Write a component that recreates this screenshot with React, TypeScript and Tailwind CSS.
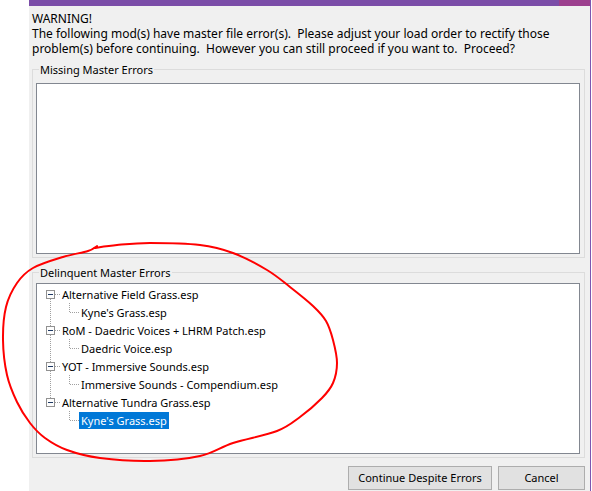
import React from "react";

const tree = [
  { name: "Alternative Field Grass.esp", child: "Kyne's Grass.esp" },
  { name: "RoM - Daedric Voices + LHRM Patch.esp", child: "Daedric Voice.esp" },
  { name: "YOT - Immersive Sounds.esp", child: "Immersive Sounds - Compendium.esp" },
  { name: "Alternative Tundra Grass.esp", child: "Kyne's Grass.esp", selected: true },
];

const dot = "#a0a0a0";

// hand drawn circle around the tree, as points
const scribble: [number, number][] = [
  [94, 248], [117, 245], [150, 243], [200, 245], [233, 253], [267, 270], [290, 287],
  [313, 306], [326, 321], [333, 340], [337, 363], [333, 383], [322, 398], [300, 417],
  [277, 431], [233, 443], [200, 456], [150, 461], [100, 458], [67, 450], [45, 438],
  [30, 423], [17, 402], [7, 375], [3, 340], [6, 307], [17, 283], [33, 268], [63, 257],
  [88, 251], [97, 246],
];

function smooth(pts: [number, number][]) {
  let d = `M${pts[0][0]},${pts[0][1]}`;
  for (let i = 0; i < pts.length - 1; i++) {
    const p0 = pts[i - 1] || pts[i];
    const p1 = pts[i];
    const p2 = pts[i + 1];
    const p3 = pts[i + 2] || p2;
    const c1x = p1[0] + (p2[0] - p0[0]) / 6;
    const c1y = p1[1] + (p2[1] - p0[1]) / 6;
    const c2x = p2[0] - (p3[0] - p1[0]) / 6;
    const c2y = p2[1] - (p3[1] - p1[1]) / 6;
    d += ` C${c1x},${c1y} ${c2x},${c2y} ${p2[0]},${p2[1]}`;
  }
  return d;
}

function RootLines({ first, last }: { first: boolean; last: boolean }) {
  return (
    <svg width="23" height="18" className="shrink-0" shapeRendering="crispEdges">
      {!first && <line x1="13.5" y1="0" x2="13.5" y2="5" stroke={dot} strokeDasharray="1 1" />}
      {!last && <line x1="13.5" y1="14" x2="13.5" y2="18" stroke={dot} strokeDasharray="1 1" />}
      <line x1="18" y1="9.5" x2="23" y2="9.5" stroke={dot} strokeDasharray="1 1" />
      <rect x="9.5" y="5.5" width="8" height="8" fill="#fdfdfd" stroke="#919191" />
      <line x1="11" y1="9.5" x2="16" y2="9.5" stroke="#1e3964" />
    </svg>
  );
}

function ChildLines({ last }: { last: boolean }) {
  return (
    <svg width="42" height="18" className="shrink-0" shapeRendering="crispEdges">
      {!last && <line x1="13.5" y1="0" x2="13.5" y2="18" stroke={dot} strokeDasharray="1 1" />}
      <line x1="32.5" y1="0" x2="32.5" y2="10" stroke={dot} strokeDasharray="1 1" />
      <line x1="33" y1="9.5" x2="42" y2="9.5" stroke={dot} strokeDasharray="1 1" />
    </svg>
  );
}

function Group({ title, tight, children }: { title: string; tight?: boolean; children?: React.ReactNode }) {
  return (
    <fieldset
      className={`w-[553px] border border-[#dcdcdc] pl-[3px] pr-[4px] pb-[3px] ${tight ? "pt-[3px]" : "pt-[6px]"}`}
    >
      <legend className="ml-[3px] px-[1px] leading-[15px] text-[11px]">{title}</legend>
      <div className="h-[171px] bg-white border border-[#828790] pt-px text-[11px]">{children}</div>
    </fieldset>
  );
}

export default function App() {
  return (
    <div
      className="relative w-[592px] h-[491px] bg-white flex overflow-hidden text-[12px] text-black"
      style={{ fontFamily: '"Noto Sans", "Segoe UI", sans-serif' }}
    >
      <div className="w-[29px] shrink-0" />
      <div className="w-[562px] shrink-0 flex flex-col bg-[#f0f0f0] border-r border-[#7c55b0]">
        {/* title bar strip */}
        <div className="h-[6px] flex">
          <div className="flex-1 bg-[#7b4da8]" />
          <div className="w-[31px] bg-[#9c3f8e]" />
        </div>

        <div className="pl-[3px] pt-[5px] flex flex-col">
          <div className="leading-[15px] whitespace-pre">
            <div>WARNING!</div>
            <div>The following mod(s) have master file error(s).  Please adjust your load order to rectify those</div>
            <div>problem(s) before continuing.  However you can still proceed if you want to.  Proceed?</div>
          </div>

          <div className="mt-[6px]">
            <Group title="Missing Master Errors" />
          </div>

          <div className="mt-[7px]">
            <Group title="Delinquent Master Errors" tight>
              {tree.map((t, i) => (
                <React.Fragment key={i}>
                  <div className="flex items-center h-[18px]">
                    <RootLines first={i === 0} last={i === tree.length - 1} />
                    <span className="px-[2px] leading-[17px] whitespace-pre">{t.name}</span>
                  </div>
                  <div className="flex items-center h-[18px]">
                    <ChildLines last={i === tree.length - 1} />
                    <span
                      className={`px-[2px] leading-[17px] whitespace-pre ${
                        t.selected ? "bg-[#0078d7] text-white" : ""
                      }`}
                    >
                      {t.child}
                    </span>
                  </div>
                </React.Fragment>
              ))}
            </Group>
          </div>

          <div className="mt-[8px] flex justify-end gap-[6px] pr-[5px] text-[11px]">
            <button className="w-[144px] h-[24px] bg-[#e1e1e1] border border-[#adadad] leading-[22px]">
              Continue Despite Errors
            </button>
            <button className="w-[87px] h-[24px] bg-[#e1e1e1] border border-[#adadad] leading-[22px]">
              Cancel
            </button>
          </div>
        </div>
      </div>

      {/* red annotation drawn over the screenshot */}
      <svg className="absolute inset-0 pointer-events-none" width="592" height="491">
        <path d={smooth(scribble)} fill="none" stroke="#ff0000" strokeWidth="2" strokeLinecap="round" strokeLinejoin="round" />
      </svg>
    </div>
  );
}
